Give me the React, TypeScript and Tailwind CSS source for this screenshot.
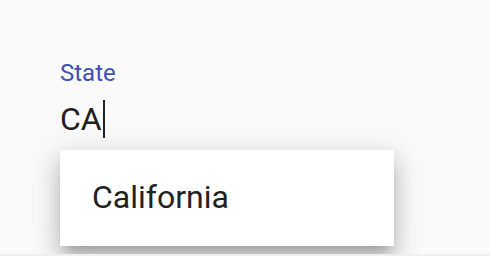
export default function App() {
  return (
    <div
      className="relative flex h-[256px] w-[490px] flex-col overflow-hidden bg-[#fafafa] pl-[60px] pt-[61px]"
      style={{ fontFamily: "Roboto, 'Noto Sans', sans-serif" }}
    >
      {/* Focused text field */}
      <label className="text-[24px] leading-[24px] text-[#3f51b5]">State</label>
      <div className="mt-[15px] flex h-[38px] items-center">
        <span className="text-[32px] leading-[32px] text-[#212121]">CA</span>
        <span className="ml-px h-[38px] w-[2px] bg-[#212121]" />
      </div>

      {/* Autocomplete menu */}
      <div className="mt-[12px] w-[334px] bg-white shadow-[0_10px_10px_-6px_rgba(0,0,0,0.2),0_16px_20px_2px_rgba(0,0,0,0.14),0_6px_28px_4px_rgba(0,0,0,0.12)]">
        <div className="pb-[32px] pl-[32px] pt-[31px] text-[32px] leading-[33px] text-[#212121]">
          California
        </div>
      </div>

      <div className="absolute bottom-0 left-0 h-[2px] w-full bg-[#efefef]" />
    </div>
  );
}
